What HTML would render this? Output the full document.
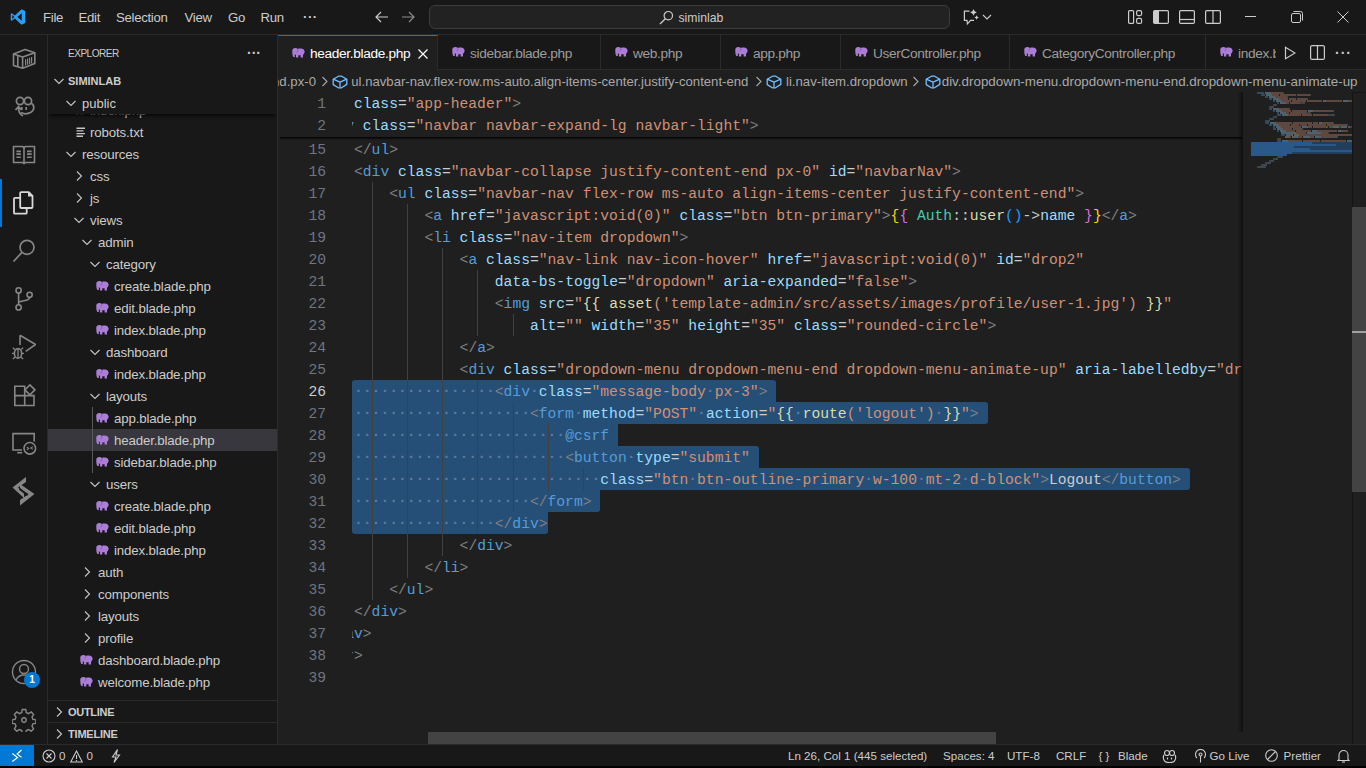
<!DOCTYPE html><html><head><meta charset="utf-8"><style>
*{margin:0;padding:0;box-sizing:border-box}
svg{display:block}
html,body{width:1366px;height:768px;overflow:hidden;background:#181818;font-family:"Liberation Sans",sans-serif;color:#cccccc}
.abs{position:absolute}
#title{position:absolute;left:0;top:0;width:1366px;height:35px;background:#181818;border-bottom:1px solid #2b2b2b}
.menu{position:absolute;top:9.5px;font-size:13.2px;letter-spacing:-0.3px;color:#cccccc;line-height:16px}
#act{position:absolute;left:0;top:35px;width:48px;height:709px;background:#181818;border-right:1px solid #2b2b2b}
#side{position:absolute;left:48px;top:35px;width:230px;height:709px;background:#181818;border-right:1px solid #2b2b2b;overflow:hidden}
.row{position:absolute;left:0;width:229px;height:22px;font-size:13.3px;letter-spacing:-0.15px;line-height:22px;color:#cccccc}
.selrow{background:#37373d}
#editor{position:absolute;left:278px;top:35px;width:1088px;height:709px;background:#1f1f1f;overflow:hidden}
.tab{position:absolute;top:0;height:35px;background:#181818;border-right:1px solid #2b2b2b;border-bottom:1px solid #2b2b2b;font-size:13px;color:#9d9d9d;overflow:hidden;line-height:16px}
.tab.act{background:#1f1f1f;border-top:1px solid #0078d4;border-bottom:none;color:#ffffff}
.tab.act span{top:9.5px!important}
.ln{position:absolute;left:0;width:48px;text-align:right;font-family:"Liberation Mono",monospace;font-size:14.67px;line-height:22px;height:22px;color:#6e7681}
.ln.act{color:#cccccc}
.cl{position:absolute;font-family:"Liberation Mono",monospace;font-size:14.67px;line-height:22px;height:22px;white-space:pre;color:#cccccc}
.ws{color:#5d7b9c;position:relative;top:-1px;font-weight:bold}
.sel{position:absolute;height:22px;background:#264f78}
.guide{position:absolute;width:1px;background:#404040}
#status{position:absolute;left:0;top:744px;width:1366px;height:22px;background:#181818;border-top:1px solid #2b2b2b;font-size:11.6px;color:#cccccc}
.st{position:absolute;top:4px;line-height:14px}
</style></head><body><div id="title">
<svg class="abs" style="left:10px;top:9px" width="16" height="16" viewBox="0 0 16 16"><path d="M11.6 0.2L15.3 2v12l-3.7 1.8L4.8 9.6 1.9 11.8 0.7 11.2V4.8l1.2-.6 2.9 2.2L11.6 0.2zM11.7 4.3L7.4 8l4.3 3.7V4.3zM2.2 6v4l2-2-2-2z" fill="#2a9df4"/></svg>
<div class="menu" style="left:43px">File</div>
<div class="menu" style="left:78.5px">Edit</div>
<div class="menu" style="left:116px">Selection</div>
<div class="menu" style="left:184.5px">View</div>
<div class="menu" style="left:228px">Go</div>
<div class="menu" style="left:260.5px">Run</div>
<div class="menu" style="left:303px"><b style="letter-spacing:0.5px;position:relative;top:-1px">&middot;&middot;&middot;</b></div>
<svg class="abs" style="left:374px;top:10px" width="16" height="14" viewBox="0 0 16 14"><path d="M14 7H2.5M7 2L2 7l5 5" fill="none" stroke="#cccccc" stroke-width="1.2"/></svg>
<svg class="abs" style="left:400px;top:10px" width="16" height="14" viewBox="0 0 16 14"><path d="M2 7h11.5M9 2l5 5-5 5" fill="none" stroke="#8b8b8b" stroke-width="1.2"/></svg>
<div class="abs" style="left:429px;top:5px;width:521px;height:24px;border:1px solid #3c3c3c;border-radius:6px;background:#222222"></div>
<svg class="abs" style="left:659px;top:10px" width="15" height="15" viewBox="0 0 15 15"><circle cx="9.3" cy="5.7" r="4.2" fill="none" stroke="#cccccc" stroke-width="1.2"/><path d="M6.3 8.7L1 14" stroke="#cccccc" stroke-width="1.3"/></svg>
<div class="abs" style="left:678.5px;top:10px;font-size:12.2px;line-height:16px;color:#cccccc">siminlab</div>
</div>
<svg class="abs" style="left:963px;top:9px" width="17" height="17" viewBox="0 0 17 17"><path d="M6.5 2.1H1.4V11.4H4L4.4 14.9 7.6 11.4H11" fill="none" stroke="#cccccc" stroke-width="1.2"/><path d="M10.5 0.1Q11 2.9 13.8 3.4 11 3.9 10.5 6.7 10 3.9 7.2 3.4 10 2.9 10.5 0.1Z M13.6 6.2Q14 8.1 15.9 8.5 14 8.9 13.6 10.8 13.2 8.9 11.3 8.5 13.2 8.1 13.6 6.2Z" fill="#cccccc"/></svg>
<svg class="abs" style="left:982px;top:13px" width="10" height="8" viewBox="0 0 10 8"><path d="M1 2l4 4 4-4" fill="none" stroke="#cccccc" stroke-width="1.1"/></svg>
<svg class="abs" style="left:1128px;top:10px" width="15" height="14" viewBox="0 0 15 14"><rect x="0.6" y="0.6" width="5" height="12.8" rx="1" fill="none" stroke="#cccccc" stroke-width="1.2"/><rect x="8.6" y="0.6" width="5" height="5" rx="1.5" fill="none" stroke="#cccccc" stroke-width="1.2"/><rect x="8.6" y="8.4" width="5" height="5" rx="1.5" fill="none" stroke="#cccccc" stroke-width="1.2"/></svg>
<svg class="abs" style="left:1153px;top:10px" width="16" height="14" viewBox="0 0 16 14"><rect x="0.6" y="0.6" width="14.8" height="12.8" rx="1.2" fill="none" stroke="#cccccc" stroke-width="1.2"/><rect x="1" y="1" width="5" height="12" fill="#cccccc"/></svg>
<svg class="abs" style="left:1179px;top:10px" width="16" height="14" viewBox="0 0 16 14"><rect x="0.6" y="0.6" width="14.8" height="12.8" rx="1.2" fill="none" stroke="#cccccc" stroke-width="1.2"/><path d="M1 9.5h14" stroke="#cccccc" stroke-width="1.2"/></svg>
<svg class="abs" style="left:1205px;top:10px" width="16" height="14" viewBox="0 0 16 14"><rect x="0.6" y="0.6" width="14.8" height="12.8" rx="1.2" fill="none" stroke="#cccccc" stroke-width="1.2"/><path d="M8 1v12" stroke="#cccccc" stroke-width="1.2"/></svg>
<svg class="abs" style="left:1245px;top:16px" width="11" height="2" viewBox="0 0 11 2"><path d="M0 0.5h11" stroke="#cccccc" stroke-width="1"/></svg>
<svg class="abs" style="left:1291px;top:11px" width="12" height="12" viewBox="0 0 12 12"><rect x="0.5" y="2.5" width="9" height="9" rx="1.5" fill="none" stroke="#cccccc" stroke-width="1"/><path d="M2.5 0.5h7a2 2 0 0 1 2 2v7" fill="none" stroke="#cccccc" stroke-width="1"/></svg>
<svg class="abs" style="left:1337px;top:11px" width="12" height="12" viewBox="0 0 12 12"><path d="M0.5 0.5l11 11M11.5 0.5l-11 11" stroke="#cccccc" stroke-width="1"/></svg>

<div id="act">
<div class="abs" style="left:0;top:144px;width:2px;height:48px;background:#0078d4"></div>
<div class="abs" style="left:12px;top:12px"><svg width="24" height="24" viewBox="0 0 24 24" fill="none" stroke="#868686" stroke-width="1.6" stroke-linejoin="round"><path d="M1.5 7.1L13.1 2.4 22.8 5.8 10.6 10z"/><path d="M1.5 7.1V18.4L10.6 21.3 22.8 16.6V5.8M10.6 10V21.3M5.8 8.8V19.8"/><path d="M13.6 12.2v6.3M15.6 11.5v6.3M17.6 10.8v6.3M19.6 10.1v6.3" stroke-width="1.2"/></svg></div>
<div class="abs" style="left:12px;top:60px"><svg width="24" height="24" viewBox="0 0 24 24" fill="none" stroke="#868686" stroke-width="1.7"><circle cx="8" cy="6" r="3.6"/><circle cx="16" cy="6" r="3.6"/><path d="M19.3 8.3C22.6 10 22.8 15 19 17.2 16 18.9 11.5 19 8.8 17.6"/><path d="M9.8 12v3M14.2 12v3"/><path d="M3.5 15L6.5 11.6 9.5 15M6.5 11.9C6.3 16.5 7.6 19.6 11 21"/></svg></div>
<div class="abs" style="left:12px;top:108px"><svg width="24" height="24" viewBox="0 0 24 24" fill="none" stroke="#868686" stroke-width="1.6" stroke-linejoin="round"><path d="M1.5 3.5H10.5L12 4.5 13.5 3.5H22.5V19.5H13.5L12 20.5 10.5 19.5H1.5Z"/><path d="M12 4.5V20M4.4 8.4H8.9M4.4 11.1H8.9M4.4 14.2H8.9M15 8.4H19.7M15 11.1H19.7M15 14.2H19.7"/></svg></div>
<div class="abs" style="left:12px;top:156px"><svg width="24" height="24" viewBox="0 0 24 24" fill="none" stroke="#d7d7d7" stroke-width="1.8" stroke-linejoin="round"><path d="M9.2 1.1H16.8L20.5 4.8V16A1 1 0 0 1 19.5 17H9.2A1 1 0 0 1 8.2 16V2.1A1 1 0 0 1 9.2 1.1Z"/><path d="M16.6 1.3V4.9H20.3" fill="#d7d7d7" stroke-width="1.2"/><path d="M8 6.8H3A1 1 0 0 0 2 7.8V21.7A1 1 0 0 0 3 22.7H13.7A1 1 0 0 0 14.7 21.7V17.5"/></svg></div>
<div class="abs" style="left:12px;top:204px"><svg width="24" height="24" viewBox="0 0 24 24" fill="none" stroke="#868686" stroke-width="1.7"><circle cx="15" cy="8.3" r="7"/><path d="M10 13.3L1.5 22.5"/></svg></div>
<div class="abs" style="left:12px;top:252px"><svg width="24" height="24" viewBox="0 0 24 24" fill="none" stroke="#868686" stroke-width="1.6"><circle cx="6.6" cy="3.4" r="2.6"/><circle cx="6.6" cy="20.4" r="2.6"/><circle cx="17.6" cy="7.8" r="2.6"/><path d="M6.6 6V17.8M17.6 10.4C17.6 14 11 13.2 6.6 15.2"/></svg></div>
<div class="abs" style="left:12px;top:299px"><svg width="24" height="26" viewBox="0 0 24 26" fill="none" stroke="#868686" stroke-width="1.6"><path d="M8 1.2V11M8 1.2L23.6 10.5 13.7 17.3"/><ellipse cx="6" cy="19.4" rx="3.6" ry="4.8"/><path d="M3 15.5L0.8 13.8M2.3 19.4H0M3 23.2L0.8 25M9 15.5L11.2 13.8M9.7 19.4H12M9 23.2L11.2 25M6 14.6V24" stroke-width="1.3"/></svg></div>
<div class="abs" style="left:12px;top:348px"><svg width="24" height="24" viewBox="0 0 24 24" fill="none" stroke="#868686" stroke-width="1.6"><path d="M2.8 3.2H12.7V22.5H2.8ZM2.8 12.6H22V22.5H12.7"/><path d="M17.9 1.9L22.9 6.9 17.9 11.9 12.9 6.9Z"/></svg></div>
<div class="abs" style="left:11px;top:396px"><svg width="26" height="24" viewBox="0 0 26 24" fill="none" stroke="#868686" stroke-width="1.6"><path d="M11 19H2V2.6H23.2V10.5"/><path d="M6.3 21.7H11.2"/><circle cx="18.8" cy="17.3" r="5.8"/><path d="M15.8 16L17.8 17.4 15.8 18.8M21.8 15.6L19.8 17 21.8 18.4" stroke-width="1.1"/></svg></div>
<div class="abs" style="left:11px;top:440px"><svg width="26" height="32" viewBox="0 0 26 32"><path d="M15 2L1.5 12.5 13 23 13 18 7 12.5 15 7Z" fill="#868686"/><path d="M9 9L23.5 19 9 30.5 9 25 17.5 19 9 14Z" fill="#868686"/><path d="M8.5 13.8L16.6 20.2" stroke="#181818" stroke-width="2"/></svg></div>
<div class="abs" style="left:0;top:621px;width:47px;height:32px;display:flex;align-items:center;justify-content:center"><svg width="26" height="26" viewBox="0 0 26 26" fill="none" stroke="#868686" stroke-width="1.4"><circle cx="13" cy="13" r="11.5"/><circle cx="13" cy="10" r="4.5"/><path d="M5 21c2-4 5-5 8-5s6 1 8 5"/></svg></div>
<div class="abs" style="left:24px;top:637px;width:16px;height:16px;border-radius:8px;background:#0078d4;color:#fff;font-size:10px;line-height:16px;text-align:center;font-weight:bold">1</div>
<div class="abs" style="left:0;top:669px;width:47px;height:32px;display:flex;align-items:center;justify-content:center"><svg width="24" height="24" viewBox="0 0 24 24" fill="none" stroke="#868686" stroke-width="1.4"><path d="M10.3 1.5h3.4l.6 3 2.2 1.1 2.7-1.6 2.4 2.4-1.6 2.7.9 2.2 3 .6v3.4l-3 .6-.9 2.2 1.6 2.7-2.4 2.4-2.7-1.6-2.2.9-.6 3h-3.4l-.6-3-2.2-.9-2.7 1.6-2.4-2.4 1.6-2.7-.9-2.2-3-.6v-3.4l3-.6.9-2.2-1.6-2.7 2.4-2.4 2.7 1.6 2.2-1.1z"/><circle cx="12" cy="12" r="2.2"/></svg></div>
</div>
<div id="side">
<div class="abs" style="left:20px;top:11px;font-size:11px;line-height:14px;letter-spacing:-0.6px;transform:scaleX(0.92);transform-origin:left">EXPLORER</div>
<div class="abs" style="left:199px;top:10px;font-size:14px;line-height:16px;letter-spacing:0px;font-weight:bold">&middot;&middot;&middot;</div>
<div class="abs" style="left:0;top:64px;width:229px;height:601px;overflow:hidden">
<div class="row" style="top:0px"><div style="position:absolute;left:23.5px;top:6px"><svg class="ele" width="14" height="11" viewBox="0 0 14 11"><path d="M0.3 2.5C0.3 1 1.5 0 3.2 0C4.3 0 5.2 0.4 5.7 1C6.5 0.6 7.5 0.5 9 0.5C11 0.5 12.2 1.5 12.4 3.3L13 3.8L12.4 4.3C12.3 5.4 11.9 6.3 11 6.8V9.6H8.6V7.3H6.3V9.6H4V7C3.6 6.8 3.2 6.5 3 6.2L2.6 6.8L3.2 8.6L2 9.3L1 8.4C0.5 7.4 0.3 6 0.3 4.5Z" fill="#ab7dd6"/><path d="M5.7 1.2C6.1 2.2 6 3.6 4.4 4.4" fill="none" stroke="#7d58ad" stroke-width="0.8"/></svg></div><span style="position:absolute;left:42px;top:1px">index.php</span></div>
<div class="row" style="top:22px"><div style="position:absolute;left:27.5px;top:5.5px"><svg class="ele" width="10" height="11" viewBox="0 0 10 11"><path d="M0.5 1.2h8.5M0.5 3.9h7M0.5 6.6h8.5M0.5 9.3h6.5" stroke="#c5c5c5" stroke-width="1.4"/></svg></div><span style="position:absolute;left:42px;top:1px">robots.txt</span></div>
<div class="row" style="top:44px"><div style="position:absolute;left:15px;top:3px"><svg class="chev" width="16" height="16" viewBox="0 0 16 16"><path d="M3.5 6l4.5 4.5L12.5 6" fill="none" stroke="#c5c5c5" stroke-width="1.1"/></svg></div><span style="position:absolute;left:34px;top:1px">resources</span></div>
<div class="row" style="top:66px"><div style="position:absolute;left:23px;top:3px"><svg class="chev" width="16" height="16" viewBox="0 0 16 16"><path d="M6 3.5l4.5 4.5L6 12.5" fill="none" stroke="#c5c5c5" stroke-width="1.1"/></svg></div><span style="position:absolute;left:42px;top:1px">css</span></div>
<div class="row" style="top:88px"><div style="position:absolute;left:23px;top:3px"><svg class="chev" width="16" height="16" viewBox="0 0 16 16"><path d="M6 3.5l4.5 4.5L6 12.5" fill="none" stroke="#c5c5c5" stroke-width="1.1"/></svg></div><span style="position:absolute;left:42px;top:1px">js</span></div>
<div class="row" style="top:110px"><div style="position:absolute;left:23px;top:3px"><svg class="chev" width="16" height="16" viewBox="0 0 16 16"><path d="M3.5 6l4.5 4.5L12.5 6" fill="none" stroke="#c5c5c5" stroke-width="1.1"/></svg></div><span style="position:absolute;left:42px;top:1px">views</span></div>
<div class="row" style="top:132px"><div style="position:absolute;left:31px;top:3px"><svg class="chev" width="16" height="16" viewBox="0 0 16 16"><path d="M3.5 6l4.5 4.5L12.5 6" fill="none" stroke="#c5c5c5" stroke-width="1.1"/></svg></div><span style="position:absolute;left:50px;top:1px">admin</span></div>
<div class="row" style="top:154px"><div style="position:absolute;left:39px;top:3px"><svg class="chev" width="16" height="16" viewBox="0 0 16 16"><path d="M3.5 6l4.5 4.5L12.5 6" fill="none" stroke="#c5c5c5" stroke-width="1.1"/></svg></div><span style="position:absolute;left:58px;top:1px">category</span></div>
<div class="row" style="top:176px"><div style="position:absolute;left:47.5px;top:6px"><svg class="ele" width="14" height="11" viewBox="0 0 14 11"><path d="M0.3 2.5C0.3 1 1.5 0 3.2 0C4.3 0 5.2 0.4 5.7 1C6.5 0.6 7.5 0.5 9 0.5C11 0.5 12.2 1.5 12.4 3.3L13 3.8L12.4 4.3C12.3 5.4 11.9 6.3 11 6.8V9.6H8.6V7.3H6.3V9.6H4V7C3.6 6.8 3.2 6.5 3 6.2L2.6 6.8L3.2 8.6L2 9.3L1 8.4C0.5 7.4 0.3 6 0.3 4.5Z" fill="#ab7dd6"/><path d="M5.7 1.2C6.1 2.2 6 3.6 4.4 4.4" fill="none" stroke="#7d58ad" stroke-width="0.8"/></svg></div><span style="position:absolute;left:66px;top:1px">create.blade.php</span></div>
<div class="row" style="top:198px"><div style="position:absolute;left:47.5px;top:6px"><svg class="ele" width="14" height="11" viewBox="0 0 14 11"><path d="M0.3 2.5C0.3 1 1.5 0 3.2 0C4.3 0 5.2 0.4 5.7 1C6.5 0.6 7.5 0.5 9 0.5C11 0.5 12.2 1.5 12.4 3.3L13 3.8L12.4 4.3C12.3 5.4 11.9 6.3 11 6.8V9.6H8.6V7.3H6.3V9.6H4V7C3.6 6.8 3.2 6.5 3 6.2L2.6 6.8L3.2 8.6L2 9.3L1 8.4C0.5 7.4 0.3 6 0.3 4.5Z" fill="#ab7dd6"/><path d="M5.7 1.2C6.1 2.2 6 3.6 4.4 4.4" fill="none" stroke="#7d58ad" stroke-width="0.8"/></svg></div><span style="position:absolute;left:66px;top:1px">edit.blade.php</span></div>
<div class="row" style="top:220px"><div style="position:absolute;left:47.5px;top:6px"><svg class="ele" width="14" height="11" viewBox="0 0 14 11"><path d="M0.3 2.5C0.3 1 1.5 0 3.2 0C4.3 0 5.2 0.4 5.7 1C6.5 0.6 7.5 0.5 9 0.5C11 0.5 12.2 1.5 12.4 3.3L13 3.8L12.4 4.3C12.3 5.4 11.9 6.3 11 6.8V9.6H8.6V7.3H6.3V9.6H4V7C3.6 6.8 3.2 6.5 3 6.2L2.6 6.8L3.2 8.6L2 9.3L1 8.4C0.5 7.4 0.3 6 0.3 4.5Z" fill="#ab7dd6"/><path d="M5.7 1.2C6.1 2.2 6 3.6 4.4 4.4" fill="none" stroke="#7d58ad" stroke-width="0.8"/></svg></div><span style="position:absolute;left:66px;top:1px">index.blade.php</span></div>
<div class="row" style="top:242px"><div style="position:absolute;left:39px;top:3px"><svg class="chev" width="16" height="16" viewBox="0 0 16 16"><path d="M3.5 6l4.5 4.5L12.5 6" fill="none" stroke="#c5c5c5" stroke-width="1.1"/></svg></div><span style="position:absolute;left:58px;top:1px">dashboard</span></div>
<div class="row" style="top:264px"><div style="position:absolute;left:47.5px;top:6px"><svg class="ele" width="14" height="11" viewBox="0 0 14 11"><path d="M0.3 2.5C0.3 1 1.5 0 3.2 0C4.3 0 5.2 0.4 5.7 1C6.5 0.6 7.5 0.5 9 0.5C11 0.5 12.2 1.5 12.4 3.3L13 3.8L12.4 4.3C12.3 5.4 11.9 6.3 11 6.8V9.6H8.6V7.3H6.3V9.6H4V7C3.6 6.8 3.2 6.5 3 6.2L2.6 6.8L3.2 8.6L2 9.3L1 8.4C0.5 7.4 0.3 6 0.3 4.5Z" fill="#ab7dd6"/><path d="M5.7 1.2C6.1 2.2 6 3.6 4.4 4.4" fill="none" stroke="#7d58ad" stroke-width="0.8"/></svg></div><span style="position:absolute;left:66px;top:1px">index.blade.php</span></div>
<div class="row" style="top:286px"><div style="position:absolute;left:39px;top:3px"><svg class="chev" width="16" height="16" viewBox="0 0 16 16"><path d="M3.5 6l4.5 4.5L12.5 6" fill="none" stroke="#c5c5c5" stroke-width="1.1"/></svg></div><span style="position:absolute;left:58px;top:1px">layouts</span></div>
<div class="row" style="top:308px"><div style="position:absolute;left:47.5px;top:6px"><svg class="ele" width="14" height="11" viewBox="0 0 14 11"><path d="M0.3 2.5C0.3 1 1.5 0 3.2 0C4.3 0 5.2 0.4 5.7 1C6.5 0.6 7.5 0.5 9 0.5C11 0.5 12.2 1.5 12.4 3.3L13 3.8L12.4 4.3C12.3 5.4 11.9 6.3 11 6.8V9.6H8.6V7.3H6.3V9.6H4V7C3.6 6.8 3.2 6.5 3 6.2L2.6 6.8L3.2 8.6L2 9.3L1 8.4C0.5 7.4 0.3 6 0.3 4.5Z" fill="#ab7dd6"/><path d="M5.7 1.2C6.1 2.2 6 3.6 4.4 4.4" fill="none" stroke="#7d58ad" stroke-width="0.8"/></svg></div><span style="position:absolute;left:66px;top:1px">app.blade.php</span></div>
<div class="row selrow" style="top:330px"><div style="position:absolute;left:47.5px;top:6px"><svg class="ele" width="14" height="11" viewBox="0 0 14 11"><path d="M0.3 2.5C0.3 1 1.5 0 3.2 0C4.3 0 5.2 0.4 5.7 1C6.5 0.6 7.5 0.5 9 0.5C11 0.5 12.2 1.5 12.4 3.3L13 3.8L12.4 4.3C12.3 5.4 11.9 6.3 11 6.8V9.6H8.6V7.3H6.3V9.6H4V7C3.6 6.8 3.2 6.5 3 6.2L2.6 6.8L3.2 8.6L2 9.3L1 8.4C0.5 7.4 0.3 6 0.3 4.5Z" fill="#ab7dd6"/><path d="M5.7 1.2C6.1 2.2 6 3.6 4.4 4.4" fill="none" stroke="#7d58ad" stroke-width="0.8"/></svg></div><span style="position:absolute;left:66px;top:1px">header.blade.php</span></div>
<div class="row" style="top:352px"><div style="position:absolute;left:47.5px;top:6px"><svg class="ele" width="14" height="11" viewBox="0 0 14 11"><path d="M0.3 2.5C0.3 1 1.5 0 3.2 0C4.3 0 5.2 0.4 5.7 1C6.5 0.6 7.5 0.5 9 0.5C11 0.5 12.2 1.5 12.4 3.3L13 3.8L12.4 4.3C12.3 5.4 11.9 6.3 11 6.8V9.6H8.6V7.3H6.3V9.6H4V7C3.6 6.8 3.2 6.5 3 6.2L2.6 6.8L3.2 8.6L2 9.3L1 8.4C0.5 7.4 0.3 6 0.3 4.5Z" fill="#ab7dd6"/><path d="M5.7 1.2C6.1 2.2 6 3.6 4.4 4.4" fill="none" stroke="#7d58ad" stroke-width="0.8"/></svg></div><span style="position:absolute;left:66px;top:1px">sidebar.blade.php</span></div>
<div class="row" style="top:374px"><div style="position:absolute;left:39px;top:3px"><svg class="chev" width="16" height="16" viewBox="0 0 16 16"><path d="M3.5 6l4.5 4.5L12.5 6" fill="none" stroke="#c5c5c5" stroke-width="1.1"/></svg></div><span style="position:absolute;left:58px;top:1px">users</span></div>
<div class="row" style="top:396px"><div style="position:absolute;left:47.5px;top:6px"><svg class="ele" width="14" height="11" viewBox="0 0 14 11"><path d="M0.3 2.5C0.3 1 1.5 0 3.2 0C4.3 0 5.2 0.4 5.7 1C6.5 0.6 7.5 0.5 9 0.5C11 0.5 12.2 1.5 12.4 3.3L13 3.8L12.4 4.3C12.3 5.4 11.9 6.3 11 6.8V9.6H8.6V7.3H6.3V9.6H4V7C3.6 6.8 3.2 6.5 3 6.2L2.6 6.8L3.2 8.6L2 9.3L1 8.4C0.5 7.4 0.3 6 0.3 4.5Z" fill="#ab7dd6"/><path d="M5.7 1.2C6.1 2.2 6 3.6 4.4 4.4" fill="none" stroke="#7d58ad" stroke-width="0.8"/></svg></div><span style="position:absolute;left:66px;top:1px">create.blade.php</span></div>
<div class="row" style="top:418px"><div style="position:absolute;left:47.5px;top:6px"><svg class="ele" width="14" height="11" viewBox="0 0 14 11"><path d="M0.3 2.5C0.3 1 1.5 0 3.2 0C4.3 0 5.2 0.4 5.7 1C6.5 0.6 7.5 0.5 9 0.5C11 0.5 12.2 1.5 12.4 3.3L13 3.8L12.4 4.3C12.3 5.4 11.9 6.3 11 6.8V9.6H8.6V7.3H6.3V9.6H4V7C3.6 6.8 3.2 6.5 3 6.2L2.6 6.8L3.2 8.6L2 9.3L1 8.4C0.5 7.4 0.3 6 0.3 4.5Z" fill="#ab7dd6"/><path d="M5.7 1.2C6.1 2.2 6 3.6 4.4 4.4" fill="none" stroke="#7d58ad" stroke-width="0.8"/></svg></div><span style="position:absolute;left:66px;top:1px">edit.blade.php</span></div>
<div class="row" style="top:440px"><div style="position:absolute;left:47.5px;top:6px"><svg class="ele" width="14" height="11" viewBox="0 0 14 11"><path d="M0.3 2.5C0.3 1 1.5 0 3.2 0C4.3 0 5.2 0.4 5.7 1C6.5 0.6 7.5 0.5 9 0.5C11 0.5 12.2 1.5 12.4 3.3L13 3.8L12.4 4.3C12.3 5.4 11.9 6.3 11 6.8V9.6H8.6V7.3H6.3V9.6H4V7C3.6 6.8 3.2 6.5 3 6.2L2.6 6.8L3.2 8.6L2 9.3L1 8.4C0.5 7.4 0.3 6 0.3 4.5Z" fill="#ab7dd6"/><path d="M5.7 1.2C6.1 2.2 6 3.6 4.4 4.4" fill="none" stroke="#7d58ad" stroke-width="0.8"/></svg></div><span style="position:absolute;left:66px;top:1px">index.blade.php</span></div>
<div class="row" style="top:462px"><div style="position:absolute;left:31px;top:3px"><svg class="chev" width="16" height="16" viewBox="0 0 16 16"><path d="M6 3.5l4.5 4.5L6 12.5" fill="none" stroke="#c5c5c5" stroke-width="1.1"/></svg></div><span style="position:absolute;left:50px;top:1px">auth</span></div>
<div class="row" style="top:484px"><div style="position:absolute;left:31px;top:3px"><svg class="chev" width="16" height="16" viewBox="0 0 16 16"><path d="M6 3.5l4.5 4.5L6 12.5" fill="none" stroke="#c5c5c5" stroke-width="1.1"/></svg></div><span style="position:absolute;left:50px;top:1px">components</span></div>
<div class="row" style="top:506px"><div style="position:absolute;left:31px;top:3px"><svg class="chev" width="16" height="16" viewBox="0 0 16 16"><path d="M6 3.5l4.5 4.5L6 12.5" fill="none" stroke="#c5c5c5" stroke-width="1.1"/></svg></div><span style="position:absolute;left:50px;top:1px">layouts</span></div>
<div class="row" style="top:528px"><div style="position:absolute;left:31px;top:3px"><svg class="chev" width="16" height="16" viewBox="0 0 16 16"><path d="M6 3.5l4.5 4.5L6 12.5" fill="none" stroke="#c5c5c5" stroke-width="1.1"/></svg></div><span style="position:absolute;left:50px;top:1px">profile</span></div>
<div class="row" style="top:550px"><div style="position:absolute;left:31.5px;top:6px"><svg class="ele" width="14" height="11" viewBox="0 0 14 11"><path d="M0.3 2.5C0.3 1 1.5 0 3.2 0C4.3 0 5.2 0.4 5.7 1C6.5 0.6 7.5 0.5 9 0.5C11 0.5 12.2 1.5 12.4 3.3L13 3.8L12.4 4.3C12.3 5.4 11.9 6.3 11 6.8V9.6H8.6V7.3H6.3V9.6H4V7C3.6 6.8 3.2 6.5 3 6.2L2.6 6.8L3.2 8.6L2 9.3L1 8.4C0.5 7.4 0.3 6 0.3 4.5Z" fill="#ab7dd6"/><path d="M5.7 1.2C6.1 2.2 6 3.6 4.4 4.4" fill="none" stroke="#7d58ad" stroke-width="0.8"/></svg></div><span style="position:absolute;left:50px;top:1px">dashboard.blade.php</span></div>
<div class="row" style="top:572px"><div style="position:absolute;left:31.5px;top:6px"><svg class="ele" width="14" height="11" viewBox="0 0 14 11"><path d="M0.3 2.5C0.3 1 1.5 0 3.2 0C4.3 0 5.2 0.4 5.7 1C6.5 0.6 7.5 0.5 9 0.5C11 0.5 12.2 1.5 12.4 3.3L13 3.8L12.4 4.3C12.3 5.4 11.9 6.3 11 6.8V9.6H8.6V7.3H6.3V9.6H4V7C3.6 6.8 3.2 6.5 3 6.2L2.6 6.8L3.2 8.6L2 9.3L1 8.4C0.5 7.4 0.3 6 0.3 4.5Z" fill="#ab7dd6"/><path d="M5.7 1.2C6.1 2.2 6 3.6 4.4 4.4" fill="none" stroke="#7d58ad" stroke-width="0.8"/></svg></div><span style="position:absolute;left:50px;top:1px">welcome.blade.php</span></div>
</div>
<div class="abs" style="left:44px;top:372px;width:1px;height:66px;background:#585858"></div>
<div class="abs" style="left:0;top:35px;width:229px;height:22px"><div style="position:absolute;left:3px;top:3px"><svg class="chev" width="16" height="16" viewBox="0 0 16 16"><path d="M3.5 6l4.5 4.5L12.5 6" fill="none" stroke="#c5c5c5" stroke-width="1.1"/></svg></div><span style="position:absolute;left:20px;top:4px;font-size:11px;font-weight:bold;line-height:14px">SIMINLAB</span></div>
<div class="abs" style="left:0;top:57px;width:229px;height:22px;background:#181818;box-shadow:0 3px 4px -2px #000"><div style="position:absolute;left:15px;top:3px"><svg class="chev" width="16" height="16" viewBox="0 0 16 16"><path d="M3.5 6l4.5 4.5L12.5 6" fill="none" stroke="#c5c5c5" stroke-width="1.1"/></svg></div><span style="position:absolute;left:34px;top:1px;font-size:13px;line-height:22px">public</span></div>
<div class="abs" style="left:0;top:665px;width:229px;height:1px;background:#2b2b2b"></div>
<div class="abs" style="left:0;top:687px;width:229px;height:1px;background:#2b2b2b"></div>
<div class="abs" style="left:0;top:666px;width:229px;height:21px"><div style="position:absolute;left:3px;top:3px"><svg class="chev" width="16" height="16" viewBox="0 0 16 16"><path d="M6 3.5l4.5 4.5L6 12.5" fill="none" stroke="#c5c5c5" stroke-width="1.1"/></svg></div><span style="position:absolute;left:20px;top:4px;font-size:11px;font-weight:bold;line-height:14px;letter-spacing:-0.3px">OUTLINE</span></div>
<div class="abs" style="left:0;top:688px;width:229px;height:21px"><div style="position:absolute;left:3px;top:3px"><svg class="chev" width="16" height="16" viewBox="0 0 16 16"><path d="M6 3.5l4.5 4.5L6 12.5" fill="none" stroke="#c5c5c5" stroke-width="1.1"/></svg></div><span style="position:absolute;left:20px;top:4px;font-size:11px;font-weight:bold;line-height:14px;letter-spacing:-0.2px">TIMELINE</span></div>
</div>
<div id="editor">
<div class="tab act" style="left:0px;width:160px"><div style="position:absolute;left:13.5px;top:11.5px"><svg class="ele" width="14" height="11" viewBox="0 0 14 11"><path d="M0.3 2.5C0.3 1 1.5 0 3.2 0C4.3 0 5.2 0.4 5.7 1C6.5 0.6 7.5 0.5 9 0.5C11 0.5 12.2 1.5 12.4 3.3L13 3.8L12.4 4.3C12.3 5.4 11.9 6.3 11 6.8V9.6H8.6V7.3H6.3V9.6H4V7C3.6 6.8 3.2 6.5 3 6.2L2.6 6.8L3.2 8.6L2 9.3L1 8.4C0.5 7.4 0.3 6 0.3 4.5Z" fill="#ab7dd6"/><path d="M5.7 1.2C6.1 2.2 6 3.6 4.4 4.4" fill="none" stroke="#7d58ad" stroke-width="0.8"/></svg></div><span style="position:absolute;left:32px;top:10.5px;font-size:13.7px;letter-spacing:-0.35px">header.blade.php</span><svg style="position:absolute;right:8px;top:12px" width="12" height="12" viewBox="0 0 12 12"><path d="M1.5 1.5l9 9M10.5 1.5l-9 9" stroke="#ffffff" stroke-width="1.2"/></svg></div>
<div class="tab" style="left:160px;width:163px"><div style="position:absolute;left:13.5px;top:11.5px"><svg class="ele" width="14" height="11" viewBox="0 0 14 11"><path d="M0.3 2.5C0.3 1 1.5 0 3.2 0C4.3 0 5.2 0.4 5.7 1C6.5 0.6 7.5 0.5 9 0.5C11 0.5 12.2 1.5 12.4 3.3L13 3.8L12.4 4.3C12.3 5.4 11.9 6.3 11 6.8V9.6H8.6V7.3H6.3V9.6H4V7C3.6 6.8 3.2 6.5 3 6.2L2.6 6.8L3.2 8.6L2 9.3L1 8.4C0.5 7.4 0.3 6 0.3 4.5Z" fill="#ab7dd6"/><path d="M5.7 1.2C6.1 2.2 6 3.6 4.4 4.4" fill="none" stroke="#7d58ad" stroke-width="0.8"/></svg></div><span style="position:absolute;left:32px;top:10.5px;font-size:13.7px;letter-spacing:-0.35px">sidebar.blade.php</span></div>
<div class="tab" style="left:323px;width:120px"><div style="position:absolute;left:13.5px;top:11.5px"><svg class="ele" width="14" height="11" viewBox="0 0 14 11"><path d="M0.3 2.5C0.3 1 1.5 0 3.2 0C4.3 0 5.2 0.4 5.7 1C6.5 0.6 7.5 0.5 9 0.5C11 0.5 12.2 1.5 12.4 3.3L13 3.8L12.4 4.3C12.3 5.4 11.9 6.3 11 6.8V9.6H8.6V7.3H6.3V9.6H4V7C3.6 6.8 3.2 6.5 3 6.2L2.6 6.8L3.2 8.6L2 9.3L1 8.4C0.5 7.4 0.3 6 0.3 4.5Z" fill="#ab7dd6"/><path d="M5.7 1.2C6.1 2.2 6 3.6 4.4 4.4" fill="none" stroke="#7d58ad" stroke-width="0.8"/></svg></div><span style="position:absolute;left:32px;top:10.5px;font-size:13.7px;letter-spacing:-0.35px">web.php</span></div>
<div class="tab" style="left:443px;width:120px"><div style="position:absolute;left:13.5px;top:11.5px"><svg class="ele" width="14" height="11" viewBox="0 0 14 11"><path d="M0.3 2.5C0.3 1 1.5 0 3.2 0C4.3 0 5.2 0.4 5.7 1C6.5 0.6 7.5 0.5 9 0.5C11 0.5 12.2 1.5 12.4 3.3L13 3.8L12.4 4.3C12.3 5.4 11.9 6.3 11 6.8V9.6H8.6V7.3H6.3V9.6H4V7C3.6 6.8 3.2 6.5 3 6.2L2.6 6.8L3.2 8.6L2 9.3L1 8.4C0.5 7.4 0.3 6 0.3 4.5Z" fill="#ab7dd6"/><path d="M5.7 1.2C6.1 2.2 6 3.6 4.4 4.4" fill="none" stroke="#7d58ad" stroke-width="0.8"/></svg></div><span style="position:absolute;left:32px;top:10.5px;font-size:13.7px;letter-spacing:-0.35px">app.php</span></div>
<div class="tab" style="left:563px;width:169px"><div style="position:absolute;left:13.5px;top:11.5px"><svg class="ele" width="14" height="11" viewBox="0 0 14 11"><path d="M0.3 2.5C0.3 1 1.5 0 3.2 0C4.3 0 5.2 0.4 5.7 1C6.5 0.6 7.5 0.5 9 0.5C11 0.5 12.2 1.5 12.4 3.3L13 3.8L12.4 4.3C12.3 5.4 11.9 6.3 11 6.8V9.6H8.6V7.3H6.3V9.6H4V7C3.6 6.8 3.2 6.5 3 6.2L2.6 6.8L3.2 8.6L2 9.3L1 8.4C0.5 7.4 0.3 6 0.3 4.5Z" fill="#ab7dd6"/><path d="M5.7 1.2C6.1 2.2 6 3.6 4.4 4.4" fill="none" stroke="#7d58ad" stroke-width="0.8"/></svg></div><span style="position:absolute;left:32px;top:10.5px;font-size:13.7px;letter-spacing:-0.35px">UserController.php</span></div>
<div class="tab" style="left:732px;width:196px"><div style="position:absolute;left:13.5px;top:11.5px"><svg class="ele" width="14" height="11" viewBox="0 0 14 11"><path d="M0.3 2.5C0.3 1 1.5 0 3.2 0C4.3 0 5.2 0.4 5.7 1C6.5 0.6 7.5 0.5 9 0.5C11 0.5 12.2 1.5 12.4 3.3L13 3.8L12.4 4.3C12.3 5.4 11.9 6.3 11 6.8V9.6H8.6V7.3H6.3V9.6H4V7C3.6 6.8 3.2 6.5 3 6.2L2.6 6.8L3.2 8.6L2 9.3L1 8.4C0.5 7.4 0.3 6 0.3 4.5Z" fill="#ab7dd6"/><path d="M5.7 1.2C6.1 2.2 6 3.6 4.4 4.4" fill="none" stroke="#7d58ad" stroke-width="0.8"/></svg></div><span style="position:absolute;left:32px;top:10.5px;font-size:13.7px;letter-spacing:-0.35px">CategoryController.php</span></div>
<div class="tab" style="left:928px;width:194px"><div style="position:absolute;left:13.5px;top:11.5px"><svg class="ele" width="14" height="11" viewBox="0 0 14 11"><path d="M0.3 2.5C0.3 1 1.5 0 3.2 0C4.3 0 5.2 0.4 5.7 1C6.5 0.6 7.5 0.5 9 0.5C11 0.5 12.2 1.5 12.4 3.3L13 3.8L12.4 4.3C12.3 5.4 11.9 6.3 11 6.8V9.6H8.6V7.3H6.3V9.6H4V7C3.6 6.8 3.2 6.5 3 6.2L2.6 6.8L3.2 8.6L2 9.3L1 8.4C0.5 7.4 0.3 6 0.3 4.5Z" fill="#ab7dd6"/><path d="M5.7 1.2C6.1 2.2 6 3.6 4.4 4.4" fill="none" stroke="#7d58ad" stroke-width="0.8"/></svg></div><span style="position:absolute;left:32px;top:10.5px;font-size:13.7px;letter-spacing:-0.35px">index.blade.php</span></div>
<div class="abs" style="left:998px;top:0;width:90px;height:35px;background:#181818;border-bottom:1px solid #2b2b2b"></div>
<svg class="abs" style="left:1006px;top:11px" width="12" height="14" viewBox="0 0 12 14"><path d="M1.5 1.2v11.6L11 7z" fill="none" stroke="#cccccc" stroke-width="1.2"/></svg>
<svg class="abs" style="left:1032px;top:10px" width="15" height="15" viewBox="0 0 15 15"><rect x="0.6" y="0.6" width="13.8" height="13.8" rx="1.5" fill="none" stroke="#cccccc" stroke-width="1.2"/><path d="M7.5 1v13" stroke="#cccccc" stroke-width="1.2"/></svg>
<div class="abs" style="left:1057px;top:9.5px;font-size:14px;line-height:16px;letter-spacing:1px;color:#cccccc;font-weight:bold">&middot;&middot;&middot;</div>
<div class="abs" style="right:1050px;top:38.5px;font-size:13.2px;line-height:16px;color:#a9a9a9;white-space:nowrap">justify-content-end.px-0</div>
<div class="abs" style="left:43px;top:41px"><svg width="8" height="12" viewBox="0 0 8 12"><path d="M1.5 1L6 5.5 1.5 10" fill="none" stroke="#a9a9a9" stroke-width="1.1"/></svg></div>
<div class="abs" style="left:477px;top:41px"><svg width="8" height="12" viewBox="0 0 8 12"><path d="M1.5 1L6 5.5 1.5 10" fill="none" stroke="#a9a9a9" stroke-width="1.1"/></svg></div>
<div class="abs" style="left:634px;top:41px"><svg width="8" height="12" viewBox="0 0 8 12"><path d="M1.5 1L6 5.5 1.5 10" fill="none" stroke="#a9a9a9" stroke-width="1.1"/></svg></div>
<div class="abs" style="left:54px;top:39.5px"><svg width="16" height="14" viewBox="0 0 16 14" fill="none" stroke="#75beff" stroke-width="1.3" stroke-linejoin="round"><path d="M1.2 4.2L6.5 1.2h3.2l5.1 3v5.2L9.5 12.8H6.3L1.2 9.6z"/><path d="M1.2 4.2L8 7.2l6.8-3M8 7.2v5.4"/></svg></div>
<div class="abs" style="left:488px;top:39.5px"><svg width="16" height="14" viewBox="0 0 16 14" fill="none" stroke="#75beff" stroke-width="1.3" stroke-linejoin="round"><path d="M1.2 4.2L6.5 1.2h3.2l5.1 3v5.2L9.5 12.8H6.3L1.2 9.6z"/><path d="M1.2 4.2L8 7.2l6.8-3M8 7.2v5.4"/></svg></div>
<div class="abs" style="left:646.5px;top:39.5px"><svg width="16" height="14" viewBox="0 0 16 14" fill="none" stroke="#75beff" stroke-width="1.3" stroke-linejoin="round"><path d="M1.2 4.2L6.5 1.2h3.2l5.1 3v5.2L9.5 12.8H6.3L1.2 9.6z"/><path d="M1.2 4.2L8 7.2l6.8-3M8 7.2v5.4"/></svg></div>
<div class="abs" style="left:73.30000000000001px;top:38.5px;font-size:13.15px;line-height:16px;color:#a9a9a9;white-space:nowrap">ul.navbar-nav.flex-row.ms-auto.align-items-center.justify-content-end</div>
<div class="abs" style="left:508px;top:38.5px;font-size:13.2px;line-height:16px;color:#a9a9a9;white-space:nowrap">li.nav-item.dropdown</div>
<div class="abs" style="left:663.7px;top:38.5px;font-size:13.4px;line-height:16px;color:#a9a9a9;white-space:nowrap">div.dropdown-menu.dropdown-menu-end.dropdown-menu-animate-up</div>
<div class="abs" style="left:0;top:57px;width:964px;height:640px;overflow:hidden">
<div class="abs" style="left:-278px;top:-92px;width:1366px;height:768px">
<div class="abs" style="left:352px;top:92px;width:890px;height:640px;overflow:hidden"><div class="abs" style="left:-352px;top:-92px;width:1366px;height:768px">
<div class="sel" style="top:380px;left:352px;width:424.4px;border-radius:3px 3px 0px 0px"></div>
<div class="sel" style="top:402px;left:352px;width:635.6px;border-radius:0px 3px 3px 0px"></div>
<div class="sel" style="top:424px;left:352px;width:266.0px;border-radius:0px 0px 0px 0px"></div>
<div class="sel" style="top:446px;left:352px;width:406.8px;border-radius:0px 3px 0px 0px"></div>
<div class="sel" style="top:468px;left:352px;width:838.0px;border-radius:0px 3px 3px 0px"></div>
<div class="sel" style="top:490px;left:352px;width:248.4px;border-radius:0px 0px 3px 0px"></div>
<div class="sel" style="top:512px;left:352px;width:195.6px;border-radius:0px 0px 3px 3px"></div>
<div class="cl" style="top:139px;left:354.0px"><span style="color:#808080">&lt;/</span><span style="color:#569cd6">ul</span><span style="color:#808080">&gt;</span></div>
<div class="cl" style="top:161px;left:354.0px"><span style="color:#808080">&lt;</span><span style="color:#569cd6">div</span> <span style="color:#9cdcfe">class</span><span style="color:#cccccc">=</span><span style="color:#ce9178">&quot;navbar-collapse justify-content-end px-0&quot;</span> <span style="color:#9cdcfe">id</span><span style="color:#cccccc">=</span><span style="color:#ce9178">&quot;navbarNav&quot;</span><span style="color:#808080">&gt;</span></div>
<div class="cl" style="top:183px;left:389.2px"><span style="color:#808080">&lt;</span><span style="color:#569cd6">ul</span> <span style="color:#9cdcfe">class</span><span style="color:#cccccc">=</span><span style="color:#ce9178">&quot;navbar-nav flex-row ms-auto align-items-center justify-content-end&quot;</span><span style="color:#808080">&gt;</span></div>
<div class="cl" style="top:205px;left:424.4px"><span style="color:#808080">&lt;</span><span style="color:#569cd6">a</span> <span style="color:#9cdcfe">href</span><span style="color:#cccccc">=</span><span style="color:#ce9178">&quot;javascript:void(0)&quot;</span> <span style="color:#9cdcfe">class</span><span style="color:#cccccc">=</span><span style="color:#ce9178">&quot;btn btn-primary&quot;</span><span style="color:#808080">&gt;</span><span style="color:#ffd700">{</span><span style="color:#da70d6">{</span> <span style="color:#4ec9b0">Auth</span><span style="color:#cccccc">::</span><span style="color:#dcdcaa">user</span><span style="color:#179fff">()</span><span style="color:#cccccc">-&gt;</span><span style="color:#9cdcfe">name</span> <span style="color:#da70d6">}</span><span style="color:#ffd700">}</span><span style="color:#808080">&lt;/</span><span style="color:#569cd6">a</span><span style="color:#808080">&gt;</span></div>
<div class="cl" style="top:227px;left:424.4px"><span style="color:#808080">&lt;</span><span style="color:#569cd6">li</span> <span style="color:#9cdcfe">class</span><span style="color:#cccccc">=</span><span style="color:#ce9178">&quot;nav-item dropdown&quot;</span><span style="color:#808080">&gt;</span></div>
<div class="cl" style="top:249px;left:459.6px"><span style="color:#808080">&lt;</span><span style="color:#569cd6">a</span> <span style="color:#9cdcfe">class</span><span style="color:#cccccc">=</span><span style="color:#ce9178">&quot;nav-link nav-icon-hover&quot;</span> <span style="color:#9cdcfe">href</span><span style="color:#cccccc">=</span><span style="color:#ce9178">&quot;javascript:void(0)&quot;</span> <span style="color:#9cdcfe">id</span><span style="color:#cccccc">=</span><span style="color:#ce9178">&quot;drop2&quot;</span></div>
<div class="cl" style="top:271px;left:494.8px"><span style="color:#9cdcfe">data-bs-toggle</span><span style="color:#cccccc">=</span><span style="color:#ce9178">&quot;dropdown&quot;</span> <span style="color:#9cdcfe">aria-expanded</span><span style="color:#cccccc">=</span><span style="color:#ce9178">&quot;false&quot;</span><span style="color:#808080">&gt;</span></div>
<div class="cl" style="top:293px;left:494.8px"><span style="color:#808080">&lt;</span><span style="color:#569cd6">img</span> <span style="color:#9cdcfe">src</span><span style="color:#cccccc">=</span><span style="color:#ce9178">&quot;</span><span style="color:#dcdcaa">{{</span> <span style="color:#dcdcaa">asset</span><span style="color:#ce9178">(&#x27;template-admin/src/assets/images/profile/user-1.jpg&#x27;)</span> <span style="color:#dcdcaa">}}</span><span style="color:#ce9178">&quot;</span></div>
<div class="cl" style="top:315px;left:530.0px"><span style="color:#9cdcfe">alt</span><span style="color:#cccccc">=</span><span style="color:#ce9178">&quot;&quot;</span> <span style="color:#9cdcfe">width</span><span style="color:#cccccc">=</span><span style="color:#ce9178">&quot;35&quot;</span> <span style="color:#9cdcfe">height</span><span style="color:#cccccc">=</span><span style="color:#ce9178">&quot;35&quot;</span> <span style="color:#9cdcfe">class</span><span style="color:#cccccc">=</span><span style="color:#ce9178">&quot;rounded-circle&quot;</span><span style="color:#808080">&gt;</span></div>
<div class="cl" style="top:337px;left:459.6px"><span style="color:#808080">&lt;/</span><span style="color:#569cd6">a</span><span style="color:#808080">&gt;</span></div>
<div class="cl" style="top:359px;left:459.6px"><span style="color:#808080">&lt;</span><span style="color:#569cd6">div</span> <span style="color:#9cdcfe">class</span><span style="color:#cccccc">=</span><span style="color:#ce9178">&quot;dropdown-menu dropdown-menu-end dropdown-menu-animate-up&quot;</span> <span style="color:#9cdcfe">aria-labelledby</span><span style="color:#cccccc">=</span><span style="color:#ce9178">&quot;drop2&quot;</span><span style="color:#808080">&gt;</span></div>
<div class="cl" style="top:381px;left:354.0px"><span class="ws">&middot;</span><span class="ws">&middot;</span><span class="ws">&middot;</span><span class="ws">&middot;</span><span class="ws">&middot;</span><span class="ws">&middot;</span><span class="ws">&middot;</span><span class="ws">&middot;</span><span class="ws">&middot;</span><span class="ws">&middot;</span><span class="ws">&middot;</span><span class="ws">&middot;</span><span class="ws">&middot;</span><span class="ws">&middot;</span><span class="ws">&middot;</span><span class="ws">&middot;</span><span style="color:#808080">&lt;</span><span style="color:#569cd6">div</span><span class="ws">&middot;</span><span style="color:#9cdcfe">class</span><span style="color:#cccccc">=</span><span style="color:#ce9178">&quot;message-body<span class="ws">&middot;</span>px-3&quot;</span><span style="color:#808080">&gt;</span></div>
<div class="cl" style="top:403px;left:354.0px"><span class="ws">&middot;</span><span class="ws">&middot;</span><span class="ws">&middot;</span><span class="ws">&middot;</span><span class="ws">&middot;</span><span class="ws">&middot;</span><span class="ws">&middot;</span><span class="ws">&middot;</span><span class="ws">&middot;</span><span class="ws">&middot;</span><span class="ws">&middot;</span><span class="ws">&middot;</span><span class="ws">&middot;</span><span class="ws">&middot;</span><span class="ws">&middot;</span><span class="ws">&middot;</span><span class="ws">&middot;</span><span class="ws">&middot;</span><span class="ws">&middot;</span><span class="ws">&middot;</span><span style="color:#808080">&lt;</span><span style="color:#569cd6">form</span><span class="ws">&middot;</span><span style="color:#9cdcfe">method</span><span style="color:#cccccc">=</span><span style="color:#ce9178">&quot;POST&quot;</span><span class="ws">&middot;</span><span style="color:#9cdcfe">action</span><span style="color:#cccccc">=</span><span style="color:#ce9178">&quot;</span><span style="color:#dcdcaa">{{</span><span class="ws">&middot;</span><span style="color:#dcdcaa">route</span><span style="color:#ce9178">(&#x27;logout&#x27;)</span><span class="ws">&middot;</span><span style="color:#dcdcaa">}}</span><span style="color:#ce9178">&quot;</span><span style="color:#808080">&gt;</span></div>
<div class="cl" style="top:425px;left:354.0px"><span class="ws">&middot;</span><span class="ws">&middot;</span><span class="ws">&middot;</span><span class="ws">&middot;</span><span class="ws">&middot;</span><span class="ws">&middot;</span><span class="ws">&middot;</span><span class="ws">&middot;</span><span class="ws">&middot;</span><span class="ws">&middot;</span><span class="ws">&middot;</span><span class="ws">&middot;</span><span class="ws">&middot;</span><span class="ws">&middot;</span><span class="ws">&middot;</span><span class="ws">&middot;</span><span class="ws">&middot;</span><span class="ws">&middot;</span><span class="ws">&middot;</span><span class="ws">&middot;</span><span class="ws">&middot;</span><span class="ws">&middot;</span><span class="ws">&middot;</span><span class="ws">&middot;</span><span style="color:#569cd6">@csrf</span></div>
<div class="cl" style="top:447px;left:354.0px"><span class="ws">&middot;</span><span class="ws">&middot;</span><span class="ws">&middot;</span><span class="ws">&middot;</span><span class="ws">&middot;</span><span class="ws">&middot;</span><span class="ws">&middot;</span><span class="ws">&middot;</span><span class="ws">&middot;</span><span class="ws">&middot;</span><span class="ws">&middot;</span><span class="ws">&middot;</span><span class="ws">&middot;</span><span class="ws">&middot;</span><span class="ws">&middot;</span><span class="ws">&middot;</span><span class="ws">&middot;</span><span class="ws">&middot;</span><span class="ws">&middot;</span><span class="ws">&middot;</span><span class="ws">&middot;</span><span class="ws">&middot;</span><span class="ws">&middot;</span><span class="ws">&middot;</span><span style="color:#808080">&lt;</span><span style="color:#569cd6">button</span><span class="ws">&middot;</span><span style="color:#9cdcfe">type</span><span style="color:#cccccc">=</span><span style="color:#ce9178">&quot;submit&quot;</span></div>
<div class="cl" style="top:469px;left:354.0px"><span class="ws">&middot;</span><span class="ws">&middot;</span><span class="ws">&middot;</span><span class="ws">&middot;</span><span class="ws">&middot;</span><span class="ws">&middot;</span><span class="ws">&middot;</span><span class="ws">&middot;</span><span class="ws">&middot;</span><span class="ws">&middot;</span><span class="ws">&middot;</span><span class="ws">&middot;</span><span class="ws">&middot;</span><span class="ws">&middot;</span><span class="ws">&middot;</span><span class="ws">&middot;</span><span class="ws">&middot;</span><span class="ws">&middot;</span><span class="ws">&middot;</span><span class="ws">&middot;</span><span class="ws">&middot;</span><span class="ws">&middot;</span><span class="ws">&middot;</span><span class="ws">&middot;</span><span class="ws">&middot;</span><span class="ws">&middot;</span><span class="ws">&middot;</span><span class="ws">&middot;</span><span style="color:#9cdcfe">class</span><span style="color:#cccccc">=</span><span style="color:#ce9178">&quot;btn<span class="ws">&middot;</span>btn-outline-primary<span class="ws">&middot;</span>w-100<span class="ws">&middot;</span>mt-2<span class="ws">&middot;</span>d-block&quot;</span><span style="color:#808080">&gt;</span><span style="color:#cccccc">Logout</span><span style="color:#808080">&lt;/</span><span style="color:#569cd6">button</span><span style="color:#808080">&gt;</span></div>
<div class="cl" style="top:491px;left:354.0px"><span class="ws">&middot;</span><span class="ws">&middot;</span><span class="ws">&middot;</span><span class="ws">&middot;</span><span class="ws">&middot;</span><span class="ws">&middot;</span><span class="ws">&middot;</span><span class="ws">&middot;</span><span class="ws">&middot;</span><span class="ws">&middot;</span><span class="ws">&middot;</span><span class="ws">&middot;</span><span class="ws">&middot;</span><span class="ws">&middot;</span><span class="ws">&middot;</span><span class="ws">&middot;</span><span class="ws">&middot;</span><span class="ws">&middot;</span><span class="ws">&middot;</span><span class="ws">&middot;</span><span style="color:#808080">&lt;/</span><span style="color:#569cd6">form</span><span style="color:#808080">&gt;</span></div>
<div class="cl" style="top:513px;left:354.0px"><span class="ws">&middot;</span><span class="ws">&middot;</span><span class="ws">&middot;</span><span class="ws">&middot;</span><span class="ws">&middot;</span><span class="ws">&middot;</span><span class="ws">&middot;</span><span class="ws">&middot;</span><span class="ws">&middot;</span><span class="ws">&middot;</span><span class="ws">&middot;</span><span class="ws">&middot;</span><span class="ws">&middot;</span><span class="ws">&middot;</span><span class="ws">&middot;</span><span class="ws">&middot;</span><span style="color:#808080">&lt;/</span><span style="color:#569cd6">div</span><span style="color:#808080">&gt;</span></div>
<div class="cl" style="top:535px;left:459.6px"><span style="color:#808080">&lt;/</span><span style="color:#569cd6">div</span><span style="color:#808080">&gt;</span></div>
<div class="cl" style="top:557px;left:424.4px"><span style="color:#808080">&lt;/</span><span style="color:#569cd6">li</span><span style="color:#808080">&gt;</span></div>
<div class="cl" style="top:579px;left:389.2px"><span style="color:#808080">&lt;/</span><span style="color:#569cd6">ul</span><span style="color:#808080">&gt;</span></div>
<div class="cl" style="top:601px;left:354.0px"><span style="color:#808080">&lt;/</span><span style="color:#569cd6">div</span><span style="color:#808080">&gt;</span></div>
<div class="cl" style="top:623px;left:318.8px"><span style="color:#808080">&lt;/</span><span style="color:#569cd6">nav</span><span style="color:#808080">&gt;</span></div>
<div class="cl" style="top:645px;left:283.6px"><span style="color:#808080">&lt;/</span><span style="color:#569cd6">header</span><span style="color:#808080">&gt;</span></div>
<div class="cl" style="top:667px;left:354.0px"></div>
<div class="guide" style="left:372px;top:182px;height:418px"></div>
<div class="guide" style="left:407px;top:204px;height:374px"></div>
<div class="guide" style="left:442px;top:248px;height:308px"></div>
<div class="guide" style="left:477px;top:270px;height:66px"></div>
<div class="guide" style="left:477px;top:380px;height:154px"></div>
<div class="guide" style="left:513px;top:314px;height:22px"></div>
<div class="guide" style="left:513px;top:402px;height:110px"></div>
<div class="guide" style="left:548px;top:424px;height:66px"></div>
<div class="guide" style="left:583px;top:468px;height:22px"></div>
</div></div>
<div class="ln" style="left:278px;top:139px">15</div>
<div class="ln" style="left:278px;top:161px">16</div>
<div class="ln" style="left:278px;top:183px">17</div>
<div class="ln" style="left:278px;top:205px">18</div>
<div class="ln" style="left:278px;top:227px">19</div>
<div class="ln" style="left:278px;top:249px">20</div>
<div class="ln" style="left:278px;top:271px">21</div>
<div class="ln" style="left:278px;top:293px">22</div>
<div class="ln" style="left:278px;top:315px">23</div>
<div class="ln" style="left:278px;top:337px">24</div>
<div class="ln" style="left:278px;top:359px">25</div>
<div class="ln act" style="left:278px;top:381px">26</div>
<div class="ln" style="left:278px;top:403px">27</div>
<div class="ln" style="left:278px;top:425px">28</div>
<div class="ln" style="left:278px;top:447px">29</div>
<div class="ln" style="left:278px;top:469px">30</div>
<div class="ln" style="left:278px;top:491px">31</div>
<div class="ln" style="left:278px;top:513px">32</div>
<div class="ln" style="left:278px;top:535px">33</div>
<div class="ln" style="left:278px;top:557px">34</div>
<div class="ln" style="left:278px;top:579px">35</div>
<div class="ln" style="left:278px;top:601px">36</div>
<div class="ln" style="left:278px;top:623px">37</div>
<div class="ln" style="left:278px;top:645px">38</div>
<div class="ln" style="left:278px;top:667px">39</div>
</div>
</div>
<div class="abs" style="left:2px;top:102px;width:962px;height:3px;background:linear-gradient(#000000 0%,rgba(0,0,0,0.55) 40%,rgba(0,0,0,0) 100%)"></div>
<div class="abs" style="left:0;top:57px;width:964px;height:45px;background:#1f1f1f">
<div class="abs" style="left:-278px;top:-92px;width:1366px;height:768px">
<div class="ln" style="left:278px;top:93px">1</div>
<div class="ln" style="left:278px;top:115px">2</div>
<div class="abs" style="left:352px;top:92px;width:890px;height:44px;overflow:hidden"><div class="abs" style="left:-352px;top:-92px;width:1366px;height:768px">
<div class="cl" style="top:93px;left:283.6px"><span style="color:#808080">&lt;</span><span style="color:#569cd6">header</span> <span style="color:#9cdcfe">class</span><span style="color:#cccccc">=</span><span style="color:#ce9178">&quot;app-header&quot;</span><span style="color:#808080">&gt;</span></div>
<div class="cl" style="top:115px;left:318.8px"><span style="color:#808080">&lt;</span><span style="color:#569cd6">nav</span> <span style="color:#9cdcfe">class</span><span style="color:#cccccc">=</span><span style="color:#ce9178">&quot;navbar navbar-expand-lg navbar-light&quot;</span><span style="color:#808080">&gt;</span></div>
</div></div></div></div>
<div class="abs" style="left:964px;top:57px;width:110px;height:652px;background:#1f1f1f"></div>
<div class="abs" style="left:1074px;top:57px;width:14px;height:652px;background:#1f1f1f;border-left:1px solid #141414;border-top:1px solid #141414"></div>
<div class="abs" style="left:960px;top:57px;width:5px;height:640px;background:linear-gradient(to right,rgba(0,0,0,0),rgba(0,0,0,0.35) 70%,rgba(0,0,0,0.5))"></div>
<div class="abs" style="left:1074px;top:172px;width:14px;height:285px;background:#434343"></div>
<div class="abs" style="left:1074px;top:296px;width:14px;height:2px;background:#a0a0a0"></div>
<div class="abs" style="left:150px;top:697px;width:568px;height:12px;background:#434343"></div>
</div>
<div id="status">
<div class="abs" style="left:0;top:0;width:34px;height:21px;background:#0078d4"></div>
<svg class="abs" style="left:0;top:0" width="34" height="22" viewBox="0 744 34 22"><path d="M12.3 752.5L17.6 756.5 12.3 760.4M21.5 749L17.1 753 21.5 756.3" fill="none" stroke="#ffffff" stroke-width="1.2"/></svg>
<svg class="abs" style="left:42px;top:4px" width="14" height="14" viewBox="0 0 14 14" fill="none" stroke="#cccccc" stroke-width="1.1"><circle cx="7" cy="7" r="6"/><path d="M4.5 4.5l5 5M9.5 4.5l-5 5"/></svg>
<div class="st" style="left:59px">0</div>
<svg class="abs" style="left:69.5px;top:4.5px" width="13" height="13" viewBox="0 0 13 13" fill="none" stroke="#cccccc" stroke-width="1.1"><path d="M6.5 1L12.3 12H0.7z"/><path d="M6.5 5v4M6.5 10v1.2"/></svg>
<div class="st" style="left:86.5px">0</div>
<svg class="abs" style="left:111px;top:4px" width="10" height="14" viewBox="0 0 10 14" fill="none" stroke="#cccccc" stroke-width="1.1"><path d="M6.5 0.5L1.5 8h3.5L3 13.5 8.5 6H5z"/></svg>
<div class="st" style="left:788px">Ln 26, Col 1 (445 selected)</div>
<div class="st" style="left:943px">Spaces: 4</div>
<div class="st" style="left:1007px">UTF-8</div>
<div class="st" style="left:1056px">CRLF</div>
<div class="st" style="left:1118px">Blade</div>
<div class="st" style="left:1209.5px">Go Live</div>
<div class="st" style="left:1283.6px">Prettier</div>
<div class="st" style="left:1098.5px;font-size:11.5px;letter-spacing:0px">{ }</div>
<svg class="abs" style="left:1162px;top:4px" width="15" height="14" viewBox="0 0 15 14" fill="none" stroke="#cccccc" stroke-width="1.2"><path d="M2 6c-1 1-1 5 1 6.5s7 1.5 9 0 2-5.5 1-6.5"/><circle cx="5" cy="4" r="2.5"/><circle cx="10" cy="4" r="2.5"/><path d="M5.5 8.5v2M9.5 8.5v2"/></svg>
<svg class="abs" style="left:1194px;top:4px" width="13" height="14" viewBox="0 0 13 14" fill="none" stroke="#cccccc" stroke-width="1.1"><circle cx="6.5" cy="5.5" r="1.5"/><path d="M6.5 7v6.5"/><path d="M3 9a5 5 0 1 1 7 0"/></svg>
<svg class="abs" style="left:1265px;top:4px" width="13" height="13" viewBox="0 0 13 13" fill="none" stroke="#cccccc" stroke-width="1.1"><circle cx="6.5" cy="6.5" r="5.8"/><path d="M2.5 10.5l8-8"/></svg>
<svg class="abs" style="left:1337px;top:4px" width="13" height="14" viewBox="0 0 13 14" fill="none" stroke="#cccccc" stroke-width="1.1"><path d="M2 10.5V6a4.5 4.5 0 0 1 9 0v4.5l1 1H1z"/><path d="M5 13h3"/></svg>
</div>
<div class="abs" style="left:0;top:766px;width:1366px;height:2px;background:#000"></div><div class="abs" style="left:1243px;top:92px;width:109px;height:640px;overflow:hidden"><div class="abs" style="left:-1243px;top:-92px;width:1366px;height:768px"><svg class="abs" style="left:0;top:0" width="1366" height="768" viewBox="0 0 1366 768"><rect x="1251" y="142" width="101" height="2" fill="#213e5c"/><rect x="1251" y="142" width="61" height="2" fill="#2a5888"/><rect x="1251" y="144" width="101" height="2" fill="#213e5c"/><rect x="1251" y="144" width="85" height="2" fill="#2a5888"/><rect x="1251" y="146" width="101" height="2" fill="#213e5c"/><rect x="1251" y="146" width="43" height="2" fill="#2a5888"/><rect x="1251" y="148" width="101" height="2" fill="#213e5c"/><rect x="1251" y="148" width="59" height="2" fill="#2a5888"/><rect x="1251" y="150" width="101" height="2" fill="#213e5c"/><rect x="1251" y="150" width="108" height="2" fill="#2a5888"/><rect x="1251" y="152" width="101" height="2" fill="#213e5c"/><rect x="1251" y="152" width="41" height="2" fill="#2a5888"/><rect x="1251" y="154" width="36" height="2" fill="#2a5888"/><rect x="1257" y="92" width="1" height="2" fill="#808080" fill-opacity="0.36"/><rect x="1258" y="92" width="6" height="2" fill="#569cd6" fill-opacity="0.36"/><rect x="1265" y="92" width="5" height="2" fill="#9cdcfe" fill-opacity="0.36"/><rect x="1270" y="92" width="1" height="2" fill="#cccccc" fill-opacity="0.36"/><rect x="1271" y="92" width="12" height="2" fill="#ce9178" fill-opacity="0.36"/><rect x="1283" y="92" width="1" height="2" fill="#808080" fill-opacity="0.36"/><rect x="1261" y="94" width="1" height="2" fill="#808080" fill-opacity="0.36"/><rect x="1262" y="94" width="3" height="2" fill="#569cd6" fill-opacity="0.36"/><rect x="1266" y="94" width="5" height="2" fill="#9cdcfe" fill-opacity="0.36"/><rect x="1271" y="94" width="1" height="2" fill="#cccccc" fill-opacity="0.36"/><rect x="1272" y="94" width="7" height="2" fill="#ce9178" fill-opacity="0.36"/><rect x="1280" y="94" width="16" height="2" fill="#ce9178" fill-opacity="0.36"/><rect x="1297" y="94" width="13" height="2" fill="#ce9178" fill-opacity="0.36"/><rect x="1310" y="94" width="1" height="2" fill="#808080" fill-opacity="0.36"/><rect x="1265" y="96" width="1" height="2" fill="#808080" fill-opacity="0.36"/><rect x="1266" y="96" width="2" height="2" fill="#569cd6" fill-opacity="0.36"/><rect x="1269" y="96" width="5" height="2" fill="#9cdcfe" fill-opacity="0.36"/><rect x="1274" y="96" width="1" height="2" fill="#cccccc" fill-opacity="0.36"/><rect x="1275" y="96" width="12" height="2" fill="#ce9178" fill-opacity="0.36"/><rect x="1287" y="96" width="1" height="2" fill="#808080" fill-opacity="0.36"/><rect x="1269" y="98" width="1" height="2" fill="#808080" fill-opacity="0.36"/><rect x="1270" y="98" width="2" height="2" fill="#569cd6" fill-opacity="0.36"/><rect x="1273" y="98" width="5" height="2" fill="#9cdcfe" fill-opacity="0.36"/><rect x="1278" y="98" width="1" height="2" fill="#cccccc" fill-opacity="0.36"/><rect x="1279" y="98" width="9" height="2" fill="#ce9178" fill-opacity="0.36"/><rect x="1289" y="98" width="7" height="2" fill="#ce9178" fill-opacity="0.36"/><rect x="1297" y="98" width="10" height="2" fill="#ce9178" fill-opacity="0.36"/><rect x="1307" y="98" width="1" height="2" fill="#808080" fill-opacity="0.36"/><rect x="1273" y="100" width="1" height="2" fill="#808080" fill-opacity="0.36"/><rect x="1274" y="100" width="1" height="2" fill="#569cd6" fill-opacity="0.36"/><rect x="1276" y="100" width="5" height="2" fill="#9cdcfe" fill-opacity="0.36"/><rect x="1281" y="100" width="1" height="2" fill="#cccccc" fill-opacity="0.36"/><rect x="1282" y="100" width="9" height="2" fill="#ce9178" fill-opacity="0.36"/><rect x="1292" y="100" width="14" height="2" fill="#ce9178" fill-opacity="0.36"/><rect x="1307" y="100" width="15" height="2" fill="#ce9178" fill-opacity="0.36"/><rect x="1323" y="100" width="2" height="2" fill="#9cdcfe" fill-opacity="0.36"/><rect x="1325" y="100" width="1" height="2" fill="#cccccc" fill-opacity="0.36"/><rect x="1326" y="100" width="16" height="2" fill="#ce9178" fill-opacity="0.36"/><rect x="1343" y="100" width="4" height="2" fill="#9cdcfe" fill-opacity="0.36"/><rect x="1347" y="100" width="1" height="2" fill="#cccccc" fill-opacity="0.36"/><rect x="1348" y="100" width="4" height="2" fill="#ce9178" fill-opacity="0.36"/><rect x="1277" y="102" width="1" height="2" fill="#808080" fill-opacity="0.36"/><rect x="1278" y="102" width="1" height="2" fill="#569cd6" fill-opacity="0.36"/><rect x="1280" y="102" width="5" height="2" fill="#9cdcfe" fill-opacity="0.36"/><rect x="1285" y="102" width="1" height="2" fill="#cccccc" fill-opacity="0.36"/><rect x="1286" y="102" width="3" height="2" fill="#ce9178" fill-opacity="0.36"/><rect x="1290" y="102" width="10" height="2" fill="#ce9178" fill-opacity="0.36"/><rect x="1300" y="102" width="1" height="2" fill="#808080" fill-opacity="0.36"/><rect x="1301" y="102" width="2" height="2" fill="#808080" fill-opacity="0.36"/><rect x="1303" y="102" width="1" height="2" fill="#569cd6" fill-opacity="0.36"/><rect x="1304" y="102" width="1" height="2" fill="#808080" fill-opacity="0.36"/><rect x="1273" y="104" width="2" height="2" fill="#808080" fill-opacity="0.36"/><rect x="1275" y="104" width="1" height="2" fill="#569cd6" fill-opacity="0.36"/><rect x="1276" y="104" width="1" height="2" fill="#808080" fill-opacity="0.36"/><rect x="1269" y="106" width="2" height="2" fill="#808080" fill-opacity="0.36"/><rect x="1271" y="106" width="2" height="2" fill="#569cd6" fill-opacity="0.36"/><rect x="1273" y="106" width="1" height="2" fill="#808080" fill-opacity="0.36"/><rect x="1269" y="108" width="1" height="2" fill="#808080" fill-opacity="0.36"/><rect x="1270" y="108" width="2" height="2" fill="#569cd6" fill-opacity="0.36"/><rect x="1273" y="108" width="5" height="2" fill="#9cdcfe" fill-opacity="0.36"/><rect x="1278" y="108" width="1" height="2" fill="#cccccc" fill-opacity="0.36"/><rect x="1279" y="108" width="10" height="2" fill="#ce9178" fill-opacity="0.36"/><rect x="1289" y="108" width="1" height="2" fill="#808080" fill-opacity="0.36"/><rect x="1273" y="110" width="1" height="2" fill="#808080" fill-opacity="0.36"/><rect x="1274" y="110" width="1" height="2" fill="#569cd6" fill-opacity="0.36"/><rect x="1276" y="110" width="5" height="2" fill="#9cdcfe" fill-opacity="0.36"/><rect x="1281" y="110" width="1" height="2" fill="#cccccc" fill-opacity="0.36"/><rect x="1282" y="110" width="9" height="2" fill="#ce9178" fill-opacity="0.36"/><rect x="1292" y="110" width="15" height="2" fill="#ce9178" fill-opacity="0.36"/><rect x="1308" y="110" width="4" height="2" fill="#9cdcfe" fill-opacity="0.36"/><rect x="1312" y="110" width="1" height="2" fill="#cccccc" fill-opacity="0.36"/><rect x="1313" y="110" width="20" height="2" fill="#ce9178" fill-opacity="0.36"/><rect x="1333" y="110" width="1" height="2" fill="#808080" fill-opacity="0.36"/><rect x="1277" y="112" width="1" height="2" fill="#808080" fill-opacity="0.36"/><rect x="1278" y="112" width="1" height="2" fill="#569cd6" fill-opacity="0.36"/><rect x="1280" y="112" width="5" height="2" fill="#9cdcfe" fill-opacity="0.36"/><rect x="1285" y="112" width="1" height="2" fill="#cccccc" fill-opacity="0.36"/><rect x="1286" y="112" width="3" height="2" fill="#ce9178" fill-opacity="0.36"/><rect x="1290" y="112" width="16" height="2" fill="#ce9178" fill-opacity="0.36"/><rect x="1306" y="112" width="1" height="2" fill="#808080" fill-opacity="0.36"/><rect x="1307" y="112" width="2" height="2" fill="#808080" fill-opacity="0.36"/><rect x="1309" y="112" width="1" height="2" fill="#569cd6" fill-opacity="0.36"/><rect x="1310" y="112" width="1" height="2" fill="#808080" fill-opacity="0.36"/><rect x="1277" y="114" width="1" height="2" fill="#808080" fill-opacity="0.36"/><rect x="1278" y="114" width="3" height="2" fill="#569cd6" fill-opacity="0.36"/><rect x="1282" y="114" width="5" height="2" fill="#9cdcfe" fill-opacity="0.36"/><rect x="1287" y="114" width="1" height="2" fill="#cccccc" fill-opacity="0.36"/><rect x="1288" y="114" width="13" height="2" fill="#ce9178" fill-opacity="0.36"/><rect x="1302" y="114" width="10" height="2" fill="#ce9178" fill-opacity="0.36"/><rect x="1313" y="114" width="15" height="2" fill="#ce9178" fill-opacity="0.36"/><rect x="1328" y="114" width="1" height="2" fill="#808080" fill-opacity="0.36"/><rect x="1329" y="114" width="2" height="2" fill="#808080" fill-opacity="0.36"/><rect x="1331" y="114" width="3" height="2" fill="#569cd6" fill-opacity="0.36"/><rect x="1334" y="114" width="1" height="2" fill="#808080" fill-opacity="0.36"/><rect x="1273" y="116" width="2" height="2" fill="#808080" fill-opacity="0.36"/><rect x="1275" y="116" width="1" height="2" fill="#569cd6" fill-opacity="0.36"/><rect x="1276" y="116" width="1" height="2" fill="#808080" fill-opacity="0.36"/><rect x="1269" y="118" width="2" height="2" fill="#808080" fill-opacity="0.36"/><rect x="1271" y="118" width="2" height="2" fill="#569cd6" fill-opacity="0.36"/><rect x="1273" y="118" width="1" height="2" fill="#808080" fill-opacity="0.36"/><rect x="1265" y="120" width="2" height="2" fill="#808080" fill-opacity="0.36"/><rect x="1267" y="120" width="2" height="2" fill="#569cd6" fill-opacity="0.36"/><rect x="1269" y="120" width="1" height="2" fill="#808080" fill-opacity="0.36"/><rect x="1265" y="122" width="1" height="2" fill="#808080" fill-opacity="0.36"/><rect x="1266" y="122" width="3" height="2" fill="#569cd6" fill-opacity="0.36"/><rect x="1270" y="122" width="5" height="2" fill="#9cdcfe" fill-opacity="0.36"/><rect x="1275" y="122" width="1" height="2" fill="#cccccc" fill-opacity="0.36"/><rect x="1276" y="122" width="16" height="2" fill="#ce9178" fill-opacity="0.36"/><rect x="1293" y="122" width="19" height="2" fill="#ce9178" fill-opacity="0.36"/><rect x="1313" y="122" width="5" height="2" fill="#ce9178" fill-opacity="0.36"/><rect x="1319" y="122" width="2" height="2" fill="#9cdcfe" fill-opacity="0.36"/><rect x="1321" y="122" width="1" height="2" fill="#cccccc" fill-opacity="0.36"/><rect x="1322" y="122" width="11" height="2" fill="#ce9178" fill-opacity="0.36"/><rect x="1333" y="122" width="1" height="2" fill="#808080" fill-opacity="0.36"/><rect x="1269" y="124" width="1" height="2" fill="#808080" fill-opacity="0.36"/><rect x="1270" y="124" width="2" height="2" fill="#569cd6" fill-opacity="0.36"/><rect x="1273" y="124" width="5" height="2" fill="#9cdcfe" fill-opacity="0.36"/><rect x="1278" y="124" width="1" height="2" fill="#cccccc" fill-opacity="0.36"/><rect x="1279" y="124" width="11" height="2" fill="#ce9178" fill-opacity="0.36"/><rect x="1291" y="124" width="8" height="2" fill="#ce9178" fill-opacity="0.36"/><rect x="1300" y="124" width="7" height="2" fill="#ce9178" fill-opacity="0.36"/><rect x="1308" y="124" width="18" height="2" fill="#ce9178" fill-opacity="0.36"/><rect x="1327" y="124" width="20" height="2" fill="#ce9178" fill-opacity="0.36"/><rect x="1347" y="124" width="1" height="2" fill="#808080" fill-opacity="0.36"/><rect x="1273" y="126" width="1" height="2" fill="#808080" fill-opacity="0.36"/><rect x="1274" y="126" width="1" height="2" fill="#569cd6" fill-opacity="0.36"/><rect x="1276" y="126" width="4" height="2" fill="#9cdcfe" fill-opacity="0.36"/><rect x="1280" y="126" width="1" height="2" fill="#cccccc" fill-opacity="0.36"/><rect x="1281" y="126" width="20" height="2" fill="#ce9178" fill-opacity="0.36"/><rect x="1302" y="126" width="5" height="2" fill="#9cdcfe" fill-opacity="0.36"/><rect x="1307" y="126" width="1" height="2" fill="#cccccc" fill-opacity="0.36"/><rect x="1308" y="126" width="4" height="2" fill="#ce9178" fill-opacity="0.36"/><rect x="1313" y="126" width="12" height="2" fill="#ce9178" fill-opacity="0.36"/><rect x="1325" y="126" width="1" height="2" fill="#808080" fill-opacity="0.36"/><rect x="1326" y="126" width="1" height="2" fill="#ffd700" fill-opacity="0.36"/><rect x="1327" y="126" width="1" height="2" fill="#da70d6" fill-opacity="0.36"/><rect x="1329" y="126" width="4" height="2" fill="#4ec9b0" fill-opacity="0.36"/><rect x="1333" y="126" width="2" height="2" fill="#cccccc" fill-opacity="0.36"/><rect x="1335" y="126" width="4" height="2" fill="#dcdcaa" fill-opacity="0.36"/><rect x="1339" y="126" width="2" height="2" fill="#179fff" fill-opacity="0.36"/><rect x="1341" y="126" width="2" height="2" fill="#cccccc" fill-opacity="0.36"/><rect x="1343" y="126" width="4" height="2" fill="#9cdcfe" fill-opacity="0.36"/><rect x="1348" y="126" width="1" height="2" fill="#da70d6" fill-opacity="0.36"/><rect x="1349" y="126" width="1" height="2" fill="#ffd700" fill-opacity="0.36"/><rect x="1350" y="126" width="2" height="2" fill="#808080" fill-opacity="0.36"/><rect x="1273" y="128" width="1" height="2" fill="#808080" fill-opacity="0.36"/><rect x="1274" y="128" width="2" height="2" fill="#569cd6" fill-opacity="0.36"/><rect x="1277" y="128" width="5" height="2" fill="#9cdcfe" fill-opacity="0.36"/><rect x="1282" y="128" width="1" height="2" fill="#cccccc" fill-opacity="0.36"/><rect x="1283" y="128" width="9" height="2" fill="#ce9178" fill-opacity="0.36"/><rect x="1293" y="128" width="9" height="2" fill="#ce9178" fill-opacity="0.36"/><rect x="1302" y="128" width="1" height="2" fill="#808080" fill-opacity="0.36"/><rect x="1277" y="130" width="1" height="2" fill="#808080" fill-opacity="0.36"/><rect x="1278" y="130" width="1" height="2" fill="#569cd6" fill-opacity="0.36"/><rect x="1280" y="130" width="5" height="2" fill="#9cdcfe" fill-opacity="0.36"/><rect x="1285" y="130" width="1" height="2" fill="#cccccc" fill-opacity="0.36"/><rect x="1286" y="130" width="9" height="2" fill="#ce9178" fill-opacity="0.36"/><rect x="1296" y="130" width="15" height="2" fill="#ce9178" fill-opacity="0.36"/><rect x="1312" y="130" width="4" height="2" fill="#9cdcfe" fill-opacity="0.36"/><rect x="1316" y="130" width="1" height="2" fill="#cccccc" fill-opacity="0.36"/><rect x="1317" y="130" width="20" height="2" fill="#ce9178" fill-opacity="0.36"/><rect x="1338" y="130" width="2" height="2" fill="#9cdcfe" fill-opacity="0.36"/><rect x="1340" y="130" width="1" height="2" fill="#cccccc" fill-opacity="0.36"/><rect x="1341" y="130" width="7" height="2" fill="#ce9178" fill-opacity="0.36"/><rect x="1281" y="132" width="14" height="2" fill="#9cdcfe" fill-opacity="0.36"/><rect x="1295" y="132" width="1" height="2" fill="#cccccc" fill-opacity="0.36"/><rect x="1296" y="132" width="10" height="2" fill="#ce9178" fill-opacity="0.36"/><rect x="1307" y="132" width="13" height="2" fill="#9cdcfe" fill-opacity="0.36"/><rect x="1320" y="132" width="1" height="2" fill="#cccccc" fill-opacity="0.36"/><rect x="1321" y="132" width="7" height="2" fill="#ce9178" fill-opacity="0.36"/><rect x="1328" y="132" width="1" height="2" fill="#808080" fill-opacity="0.36"/><rect x="1281" y="134" width="1" height="2" fill="#808080" fill-opacity="0.36"/><rect x="1282" y="134" width="3" height="2" fill="#569cd6" fill-opacity="0.36"/><rect x="1286" y="134" width="3" height="2" fill="#9cdcfe" fill-opacity="0.36"/><rect x="1289" y="134" width="1" height="2" fill="#cccccc" fill-opacity="0.36"/><rect x="1290" y="134" width="1" height="2" fill="#ce9178" fill-opacity="0.36"/><rect x="1291" y="134" width="2" height="2" fill="#dcdcaa" fill-opacity="0.36"/><rect x="1294" y="134" width="5" height="2" fill="#dcdcaa" fill-opacity="0.36"/><rect x="1299" y="134" width="53" height="2" fill="#ce9178" fill-opacity="0.36"/><rect x="1285" y="136" width="3" height="2" fill="#9cdcfe" fill-opacity="0.36"/><rect x="1288" y="136" width="1" height="2" fill="#cccccc" fill-opacity="0.36"/><rect x="1289" y="136" width="2" height="2" fill="#ce9178" fill-opacity="0.36"/><rect x="1292" y="136" width="5" height="2" fill="#9cdcfe" fill-opacity="0.36"/><rect x="1297" y="136" width="1" height="2" fill="#cccccc" fill-opacity="0.36"/><rect x="1298" y="136" width="4" height="2" fill="#ce9178" fill-opacity="0.36"/><rect x="1303" y="136" width="6" height="2" fill="#9cdcfe" fill-opacity="0.36"/><rect x="1309" y="136" width="1" height="2" fill="#cccccc" fill-opacity="0.36"/><rect x="1310" y="136" width="4" height="2" fill="#ce9178" fill-opacity="0.36"/><rect x="1315" y="136" width="5" height="2" fill="#9cdcfe" fill-opacity="0.36"/><rect x="1320" y="136" width="1" height="2" fill="#cccccc" fill-opacity="0.36"/><rect x="1321" y="136" width="16" height="2" fill="#ce9178" fill-opacity="0.36"/><rect x="1337" y="136" width="1" height="2" fill="#808080" fill-opacity="0.36"/><rect x="1277" y="138" width="2" height="2" fill="#808080" fill-opacity="0.36"/><rect x="1279" y="138" width="1" height="2" fill="#569cd6" fill-opacity="0.36"/><rect x="1280" y="138" width="1" height="2" fill="#808080" fill-opacity="0.36"/><rect x="1277" y="140" width="1" height="2" fill="#808080" fill-opacity="0.36"/><rect x="1278" y="140" width="3" height="2" fill="#569cd6" fill-opacity="0.36"/><rect x="1282" y="140" width="5" height="2" fill="#9cdcfe" fill-opacity="0.36"/><rect x="1287" y="140" width="1" height="2" fill="#cccccc" fill-opacity="0.36"/><rect x="1288" y="140" width="14" height="2" fill="#ce9178" fill-opacity="0.36"/><rect x="1303" y="140" width="17" height="2" fill="#ce9178" fill-opacity="0.36"/><rect x="1321" y="140" width="25" height="2" fill="#ce9178" fill-opacity="0.36"/><rect x="1347" y="140" width="5" height="2" fill="#9cdcfe" fill-opacity="0.36"/><rect x="1277" y="156" width="2" height="2" fill="#808080" fill-opacity="0.36"/><rect x="1279" y="156" width="3" height="2" fill="#569cd6" fill-opacity="0.36"/><rect x="1282" y="156" width="1" height="2" fill="#808080" fill-opacity="0.36"/><rect x="1273" y="158" width="2" height="2" fill="#808080" fill-opacity="0.36"/><rect x="1275" y="158" width="2" height="2" fill="#569cd6" fill-opacity="0.36"/><rect x="1277" y="158" width="1" height="2" fill="#808080" fill-opacity="0.36"/><rect x="1269" y="160" width="2" height="2" fill="#808080" fill-opacity="0.36"/><rect x="1271" y="160" width="2" height="2" fill="#569cd6" fill-opacity="0.36"/><rect x="1273" y="160" width="1" height="2" fill="#808080" fill-opacity="0.36"/><rect x="1265" y="162" width="2" height="2" fill="#808080" fill-opacity="0.36"/><rect x="1267" y="162" width="3" height="2" fill="#569cd6" fill-opacity="0.36"/><rect x="1270" y="162" width="1" height="2" fill="#808080" fill-opacity="0.36"/><rect x="1261" y="164" width="2" height="2" fill="#808080" fill-opacity="0.36"/><rect x="1263" y="164" width="3" height="2" fill="#569cd6" fill-opacity="0.36"/><rect x="1266" y="164" width="1" height="2" fill="#808080" fill-opacity="0.36"/><rect x="1257" y="166" width="2" height="2" fill="#808080" fill-opacity="0.36"/><rect x="1259" y="166" width="6" height="2" fill="#569cd6" fill-opacity="0.36"/><rect x="1265" y="166" width="1" height="2" fill="#808080" fill-opacity="0.36"/></svg></div></div></body></html>
